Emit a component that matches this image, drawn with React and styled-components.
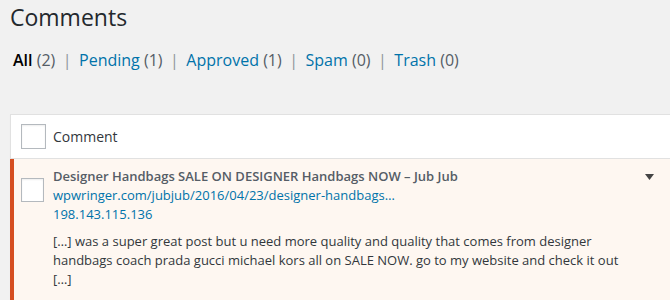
import React from 'react';
import styled, { createGlobalStyle } from 'styled-components';

const GlobalStyle = createGlobalStyle`
    html, body {
        margin: 0;
        padding: 0;
        background: #f1f1f1;
        overflow: hidden;
    }
    body {
        font-family: "Open Sans", "Liberation Sans", sans-serif;
        color: #32373c;
    }
`

const Wrap = styled.div`
    width: 670px;
    height: 300px;
    padding-top: 3px;
    box-sizing: border-box;
`

const Title = styled.h1`
    margin: 0 0 0 10px;
    font-size: 23px;
    font-weight: 400;
    line-height: 29px;
    color: #23282d;
`

const Filters = styled.ul`
    list-style: none;
    margin: 16px 0 0 13px;
    padding: 0;
    display: flex;
    align-items: center;
    font-size: 16px;
    line-height: 24px;
    color: #555d66;
`

const FilterItem = styled.li`
    display: flex;
    white-space: pre;
`

const FilterLink = styled.a`
    color: ${p => (p.$current ? '#000' : '#0073aa')};
    font-weight: ${p => (p.$current ? 600 : 400)};
    text-decoration: none;
`

const Count = styled.span`
    color: #555d66;
`

const Sep = styled.span`
    color: #8f959b;
    margin: 0 7.5px;
`

const Table = styled.div`
    margin: 42px 0 0 10px;
    background: #fff;
    box-shadow: 0 1px 1px rgba(0, 0, 0, 0.04);
`

const HeadRow = styled.div`
    display: flex;
    align-items: center;
    height: 43px;
    border: 1px solid #e1e1e1;
    border-right: none;
`

const CheckCell = styled.div`
    width: ${p => p.$width}px;
    flex-shrink: 0;
    display: flex;
    padding-left: ${p => p.$pad}px;
    box-sizing: border-box;
    align-self: ${p => (p.$top ? 'flex-start' : 'center')};
    padding-top: ${p => (p.$top ? '11px' : '0')};
`

const Box = styled.span`
    display: block;
    width: ${p => p.$w}px;
    height: ${p => p.$h}px;
    box-sizing: border-box;
    border: 1px solid #b4b9be;
    background: #fff;
    box-shadow: inset 0 1px 2px rgba(0, 0, 0, 0.07);
`

const HeadLabel = styled.span`
    font-size: 14px;
    color: #32373c;
`

const CommentRow = styled.div`
    display: flex;
    position: relative;
    background: #fef7f1;
    border-left: 4px solid #d54e21;
    padding: 8px 0 9px;
    min-height: 141px;
    box-sizing: border-box;
`

const Body = styled.div`
    flex: 1;
    padding-right: 40px;
    font-size: 13px;
    line-height: 19px;
`

const Author = styled.strong`
    display: block;
    font-weight: 600;
    color: #555d66;
`

const MetaLink = styled.a`
    display: block;
    color: #0073aa;
    text-decoration: none;
`

const Text = styled.p`
    margin: 8px 0 0;
    color: #32373c;
`

const Toggle = styled.button`
    position: absolute;
    top: 10px;
    right: 13px;
    width: 16px;
    height: 16px;
    padding: 0;
    border: none;
    background: transparent;
    display: flex;
    align-items: center;
    justify-content: center;
`

const filters = [
    { label: 'All', count: 2, current: true },
    { label: 'Pending', count: 1 },
    { label: 'Approved', count: 1 },
    { label: 'Spam', count: 0 },
    { label: 'Trash', count: 0 },
]

const App = () => {
    return (
        <Wrap>
            <GlobalStyle />
            <Title>Comments</Title>
            <Filters>
                {filters.map((f, i) => (
                    <FilterItem key={f.label}>
                        <FilterLink $current={f.current}>{f.label}</FilterLink>
                        <Count> ({f.count})</Count>
                        {i < filters.length - 1 && <Sep>|</Sep>}
                    </FilterItem>
                ))}
            </Filters>
            <Table>
                <HeadRow>
                    <CheckCell $width={42} $pad={10}>
                        <Box $w={25} $h={25} />
                    </CheckCell>
                    <HeadLabel>Comment</HeadLabel>
                </HeadRow>
                <CommentRow>
                    <CheckCell $width={39} $pad={7} $top>
                        <Box $w={23} $h={24} />
                    </CheckCell>
                    <Body>
                        <Author>Designer Handbags SALE ON DESIGNER Handbags NOW – Jub Jub</Author>
                        <MetaLink>wpwringer.com/jubjub/2016/04/23/designer-handbags…</MetaLink>
                        <MetaLink>198.143.115.136</MetaLink>
                        <Text>
                            […] was a super great post but u need more quality and quality that comes from designer
                            handbags coach prada gucci michael kors all on SALE NOW. go to my website and check it out
                            […]
                        </Text>
                    </Body>
                    <Toggle aria-label="Show more details">
                        <svg width="9" height="6" viewBox="0 0 9 6">
                            <polygon points="0,0 9,0 4.5,6" fill="#444" />
                        </svg>
                    </Toggle>
                </CommentRow>
            </Table>
        </Wrap>
    )
}

export default App;
